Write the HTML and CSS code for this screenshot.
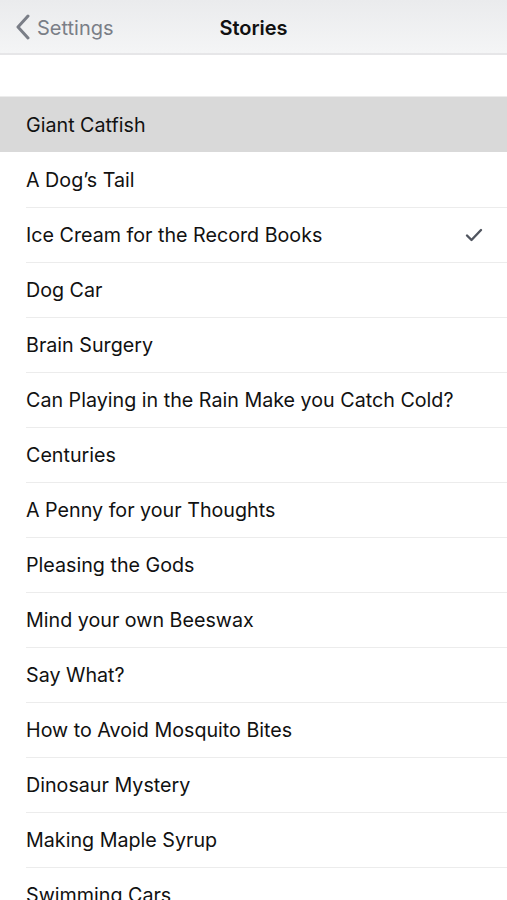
FILE: index.html
```html
<!DOCTYPE html>
<html lang="en">
<head>
  <meta charset="UTF-8" />
  <meta name="viewport" content="width=device-width, initial-scale=1.0" />
  <title>Stories</title>
  <link rel="stylesheet" href="styles.css">
</head>
<body>
  <header class="navbar">
    <a class="back" href="#">
      <svg class="chevron" width="16" height="26" viewBox="0 0 16 26"><path d="M13 2 L3 13 L13 24" fill="none" stroke="currentColor" stroke-width="3" stroke-linecap="round" stroke-linejoin="round"/></svg>
      <span>Settings</span>
    </a>
    <h1>Stories</h1>
  </header>

  <div class="gap"></div>

  <ul class="list">
    <li class="row selected"><span>Giant Catfish</span></li>
    <li class="row"><span>A Dog’s Tail</span></li>
    <li class="row"><span>Ice Cream for the Record Books</span>
      <svg class="check" width="18" height="14" viewBox="0 0 18 14"><path d="M2 7.5 L6.5 12 L16 2" fill="none" stroke="currentColor" stroke-width="2.4" stroke-linecap="round" stroke-linejoin="round"/></svg>
    </li>
    <li class="row"><span>Dog Car</span></li>
    <li class="row"><span>Brain Surgery</span></li>
    <li class="row"><span>Can Playing in the Rain Make you Catch Cold?</span></li>
    <li class="row"><span>Centuries</span></li>
    <li class="row"><span>A Penny for your Thoughts</span></li>
    <li class="row"><span>Pleasing the Gods</span></li>
    <li class="row"><span>Mind your own Beeswax</span></li>
    <li class="row"><span>Say What?</span></li>
    <li class="row"><span>How to Avoid Mosquito Bites</span></li>
    <li class="row"><span>Dinosaur Mystery</span></li>
    <li class="row"><span>Making Maple Syrup</span></li>
    <li class="row"><span>Swimming Cars</span></li>
  </ul>
</body>
</html>
```

FILE: styles.css
```css
* { box-sizing: border-box; }
body {
  margin: 0;
  font-family: Inter, "Open Sans", sans-serif;
  background-color: #ffffff;
  color: #111;
  overflow: hidden;
}
.navbar {
  position: relative;
  height: 55px;
  display: flex;
  align-items: center;
  padding-top: 2px;
  background: linear-gradient(#eaebed, #f4f5f6);
  border-bottom: 2px solid #e6e6e8;
}
.back {
  display: flex;
  align-items: center;
  gap: 6px;
  padding-left: 15px;
  color: #7a7e87;
  text-decoration: none;
  font-size: 20px;
}
.chevron { margin-top: -1px; }
.navbar h1 {
  position: absolute;
  left: 0;
  right: 0;
  margin: 0;
  text-align: center;
  font-size: 20px;
  font-weight: 600;
  color: #111;
  pointer-events: none;
}
.gap {
  height: 42px;
  border-bottom: 1px solid #ececec;
}
.list {
  list-style: none;
  margin: 0;
  padding: 0;
}
.row {
  height: 55px;
  display: flex;
  align-items: center;
  justify-content: space-between;
  padding: 0 26px;
  font-size: 19.7px;
  position: relative;
}
.row + .row::before {
  content: "";
  position: absolute;
  top: 0;
  left: 26px;
  right: 0;
  border-top: 1px solid #ececec;
}
.row.selected { background-color: #d9d9d9; }
.row.selected + .row::before { display: none; }
.check { color: #50555f; margin-right: -2px; }
```
